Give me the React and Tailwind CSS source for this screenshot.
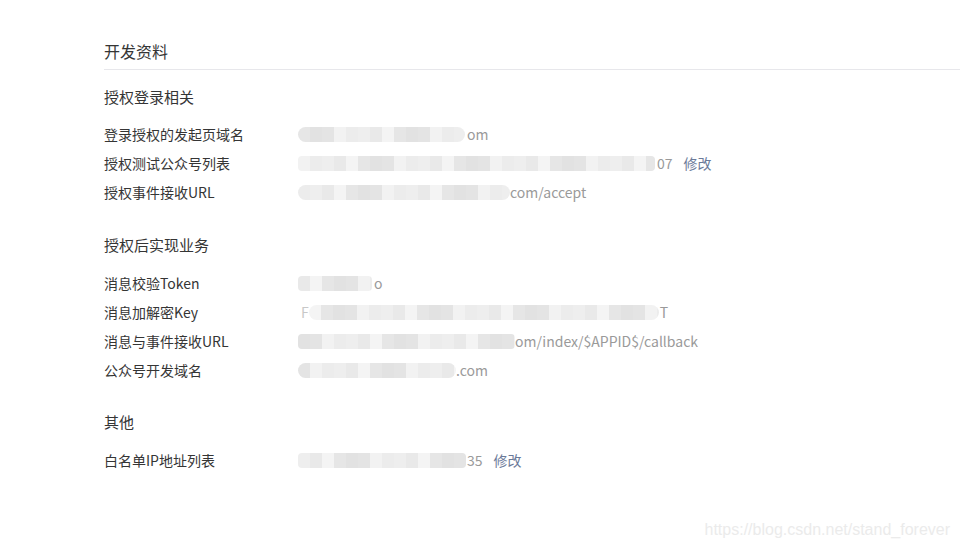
import React from "react";

const shades = ["bg-[#eeeeee]", "bg-[#e6e6e6]", "bg-[#f2f2f2]", "bg-[#e9e9e9]", "bg-[#e2e2e2]", "bg-[#ececec]", "bg-[#f4f4f4]", "bg-[#e4e4e4]"];

function Blur({ w, rounded = false, offset = 0 }) {
  const n = Math.ceil(w / 12);
  const blocks = [];
  for (let i = 0; i < n; i++) {
    blocks.push(<div key={i} className={"h-full w-[12px] shrink-0 " + shades[(i * 3 + offset) % shades.length]} />);
  }
  return (
    <div
      className={"flex h-[15px] overflow-hidden blur-[0.6px] " + (rounded ? "rounded-full" : "rounded-sm")}
      style={{ width: w }}
    >
      {blocks}
    </div>
  );
}

function Row({ label, children }) {
  return (
    <div className="flex h-[29px] items-center">
      <div className="w-[194px] shrink-0 text-[14px] text-[#353535]">{label}</div>
      <div className="flex items-center text-[14px] text-[#9a9a9a]">{children}</div>
    </div>
  );
}

const Edit = () => <span className="ml-[11px] text-[14px] text-[#6b7a99]">修改</span>;

export default function App() {
  return (
    <div
      className="relative h-[550px] w-[960px] overflow-hidden bg-white"
      style={{ fontFamily: '"Noto Sans CJK SC", "Noto Sans", sans-serif' }}
    >
      <div className="pl-[104px] pt-[39px]">
        <div className="flex h-[24px] items-center text-[16px] text-[#353535]">开发资料</div>
        <div className="mt-[6px] h-px bg-[#e7e7eb]" />

        <div className="mt-[16px] flex h-[22px] items-center text-[15px] text-[#353535]">授权登录相关</div>
        <div className="mt-[11.5px]">
          <Row label="登录授权的发起页域名">
            <Blur w={167} rounded offset={1} />
            <span className="ml-[2px]">om</span>
          </Row>
          <Row label="授权测试公众号列表">
            <Blur w={357} offset={2} />
            <span className="ml-[2px]">07</span>
            <Edit />
          </Row>
          <Row label="授权事件接收URL">
            <Blur w={212} rounded offset={5} />
            <span>com/accept</span>
          </Row>
        </div>

        <div className="mt-[27.5px] flex h-[22px] items-center text-[15px] text-[#353535]">授权后实现业务</div>
        <div className="mt-[12.5px]">
          <Row label="消息校验Token">
            <Blur w={74} offset={3} />
            <span className="ml-[2px]">o</span>
          </Row>
          <Row label="消息加解密Key">
            <span className="ml-[3px] text-[#c8c8c8]">F</span>
            <Blur w={350} rounded offset={6} />
            <span className="ml-[1px]">T</span>
          </Row>
          <Row label="消息与事件接收URL">
            <Blur w={217} offset={4} />
            <span>om/index/$APPID$/callback</span>
          </Row>
          <Row label="公众号开发域名">
            <Blur w={158} rounded offset={7} />
            <span>.com</span>
          </Row>
        </div>

        <div className="mt-[26.5px] flex h-[22px] items-center text-[15px] text-[#353535]">其他</div>
        <div className="mt-[12.5px]">
          <Row label="白名单IP地址列表">
            <Blur w={168} offset={0} />
            <span className="ml-[1px]">35</span>
            <Edit />
          </Row>
        </div>
      </div>

      <div
        className="absolute bottom-[8px] right-[10px] text-[16px] text-[#ebebeb]"
        style={{ fontFamily: '"Liberation Sans", Arial, sans-serif' }}
      >
        https://blog.csdn.net/stand_forever
      </div>
    </div>
  );
}
